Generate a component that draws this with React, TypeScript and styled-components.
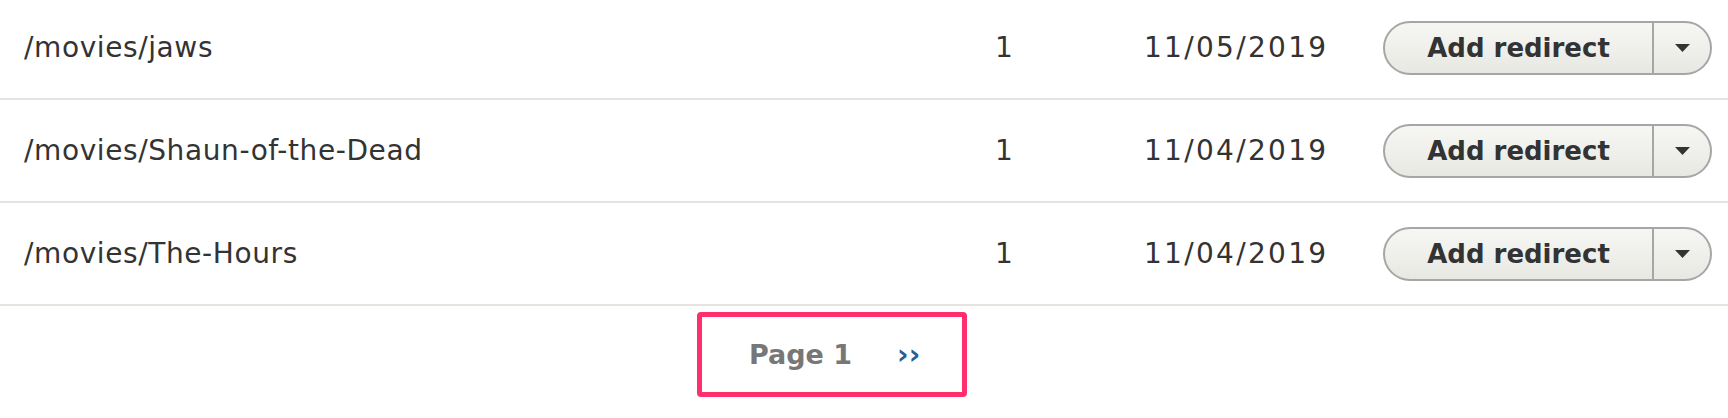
import styled, { createGlobalStyle } from 'styled-components'

const GlobalStyle = createGlobalStyle`
	html, body {
		margin: 0;
		padding: 0;
		background: #fff;
	}

	body {
		font-family: 'DejaVu Sans', 'Liberation Sans', sans-serif;
		color: #333;
		overflow: hidden;
	}
`

const Table = styled.div`
	margin-top: -3px;
	width: 100%;
`

const Row = styled.div`
	display: grid;
	grid-template-columns: 971px 149px 239px 1fr;
	align-items: center;
	height: 101px;
	border-bottom: 2px solid #e6e4df;
`

const Cell = styled.div<{ $spacing?: number }>`
	padding-left: 24px;
	font-size: 28px;
	line-height: 1.2;
	color: #333;
	white-space: nowrap;
	letter-spacing: ${p => p.$spacing ?? 0}px;
`

const SplitButton = styled.div`
	display: flex;
	align-items: stretch;
	width: 329px;
	height: 54px;
	box-sizing: border-box;
	border: 2px solid #a6a6a6;
	border-radius: 30px;
	background: linear-gradient(to bottom, #f6f6f3, #e8e8e3);
	overflow: hidden;
`

const MainAction = styled.button`
	flex: 1;
	border: 0;
	background: transparent;
	padding: 0;
	font-family: 'DejaVu Sans', 'Liberation Sans', sans-serif;
	font-weight: bold;
	font-size: 26px;
	color: #333;
	cursor: pointer;
`

const Toggle = styled.button`
	display: flex;
	align-items: center;
	justify-content: center;
	width: 58px;
	border: 0;
	border-left: 2px solid #a6a6a6;
	background: transparent;
	padding: 0;
	cursor: pointer;
`

const Pager = styled.div`
	display: flex;
	justify-content: center;
	padding: 6px 64px 0 0;
`

const PagerBox = styled.nav`
	display: flex;
	align-items: center;
	width: 270px;
	height: 85px;
	box-sizing: border-box;
	padding: 0 0 0 47px;
	gap: 45px;
	border: 5px solid #ff2f6e;
	border-radius: 4px;
`

const CurrentPage = styled.span`
	font-size: 27px;
	font-weight: bold;
	color: #777;
`

const NextLink = styled.a`
	font-size: 28px;
	font-weight: bold;
	color: #26608f;
	text-decoration: none;
	letter-spacing: 0;
`

const rows = [
	{ path: '/movies/jaws', count: 1, date: '11/05/2019' },
	{ path: '/movies/Shaun-of-the-Dead', count: 1, date: '11/04/2019' },
	{ path: '/movies/The-Hours', count: 1, date: '11/04/2019' },
]

export default function App() {
	return (
		<>
			<GlobalStyle />
			<Table>
				{rows.map(row => (
					<Row key={row.path}>
						<Cell $spacing={0.6}>{row.path}</Cell>
						<Cell>{row.count}</Cell>
						<Cell $spacing={2.3}>{row.date}</Cell>
						<Cell>
							<SplitButton>
								<MainAction>Add redirect</MainAction>
								<Toggle aria-label='More actions'>
									<svg width='15' height='8' viewBox='0 0 15 8'>
										<path d='M0 0h15L7.5 8z' fill='#333' />
									</svg>
								</Toggle>
							</SplitButton>
						</Cell>
					</Row>
				))}
			</Table>
			<Pager>
				<PagerBox>
					<CurrentPage>Page 1</CurrentPage>
					<NextLink href='#'>››</NextLink>
				</PagerBox>
			</Pager>
		</>
	)
}
